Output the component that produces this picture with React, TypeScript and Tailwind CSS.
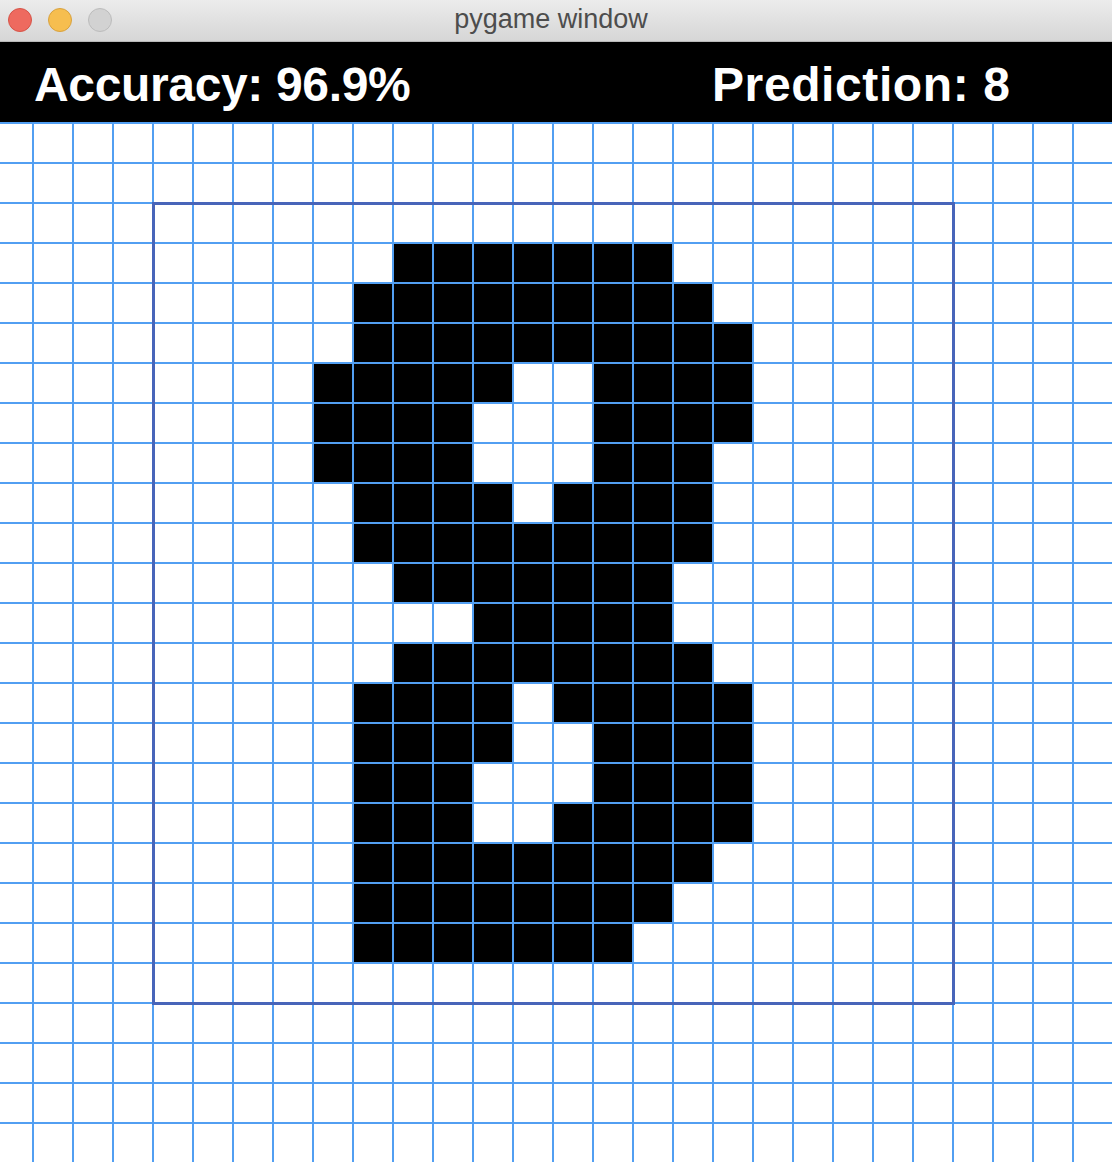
const COLS = 28
const FIRST_ROW = 2
const LAST_ROW = 27

// filled pixel runs per row, [startCol, endCol] inclusive
const FILLED: Record<number, [number, number][]> = {
  5: [[10, 16]],
  6: [[9, 17]],
  7: [[9, 18]],
  8: [[8, 12], [15, 18]],
  9: [[8, 11], [15, 18]],
  10: [[8, 11], [15, 17]],
  11: [[9, 12], [14, 17]],
  12: [[9, 17]],
  13: [[10, 16]],
  14: [[12, 16]],
  15: [[10, 17]],
  16: [[9, 12], [14, 18]],
  17: [[9, 12], [15, 18]],
  18: [[9, 11], [15, 18]],
  19: [[9, 11], [14, 18]],
  20: [[9, 17]],
  21: [[9, 16]],
  22: [[9, 15]],
}

function isFilled(row: number, col: number) {
  const runs = FILLED[row]
  if (!runs) return false
  return runs.some(([a, b]) => col >= a && col <= b)
}

function TitleBar() {
  return (
    <div className="relative flex h-[42px] items-start justify-center border-b border-[#b9b9b9] bg-gradient-to-b from-[#ececec] to-[#d6d6d6] pr-[10px]">
      <div className="absolute left-[8px] top-[8px] flex gap-[16px]">
        <span className="h-[24px] w-[24px] rounded-full border border-[#d65448] bg-[#ee6a5f]" />
        <span className="h-[24px] w-[24px] rounded-full border border-[#d8a23f] bg-[#f6be4f]" />
        <span className="h-[24px] w-[24px] rounded-full border border-[#bcbcbc] bg-[#d2d2d2]" />
      </div>
      <span className="pt-[6px] font-['Liberation_Sans',Arial,sans-serif] text-[27px] leading-[26px] text-[#4d4d4d]">
        pygame window
      </span>
    </div>
  )
}

function Header() {
  return (
    <div className="flex h-[80px] bg-black pl-[34px] pt-[19px] font-['Liberation_Sans',Arial,sans-serif] text-[48px] font-bold leading-[48px] text-white">
      <span className="w-[678px] tracking-[-0.35px]">Accuracy: 96.9%</span>
      <span className="tracking-[0.6px]">Prediction: 8</span>
    </div>
  )
}

function PixelGrid() {
  const rows: number[] = []
  for (let r = FIRST_ROW; r <= LAST_ROW; r++) rows.push(r)
  const cols = Array.from({ length: COLS }, (_, i) => i)

  return (
    <div className="relative flex-1 overflow-hidden border-t-2 border-[#529ff2] bg-white">
      <div className="-ml-[6px] grid w-[1120px] grid-cols-[repeat(28,40px)] auto-rows-[40px]">
        {rows.map((r) =>
          cols.map((c) => (
            <div
              key={`${r}-${c}`}
              className={
                isFilled(r, c)
                  ? "border-b-2 border-r-2 border-[#529ff2] bg-black"
                  : "border-b-2 border-r-2 border-[#529ff2] bg-white"
              }
            />
          )),
        )}
      </div>
      {/* 20x20 bounding box */}
      <div className="absolute left-[152px] top-[78px] h-[803px] w-[803px] border-[3px] border-[#4865b9]" />
    </div>
  )
}

export default function App() {
  return (
    <div className="flex h-[1162px] w-[1112px] flex-col overflow-hidden bg-white">
      <TitleBar />
      <Header />
      <PixelGrid />
    </div>
  )
}
